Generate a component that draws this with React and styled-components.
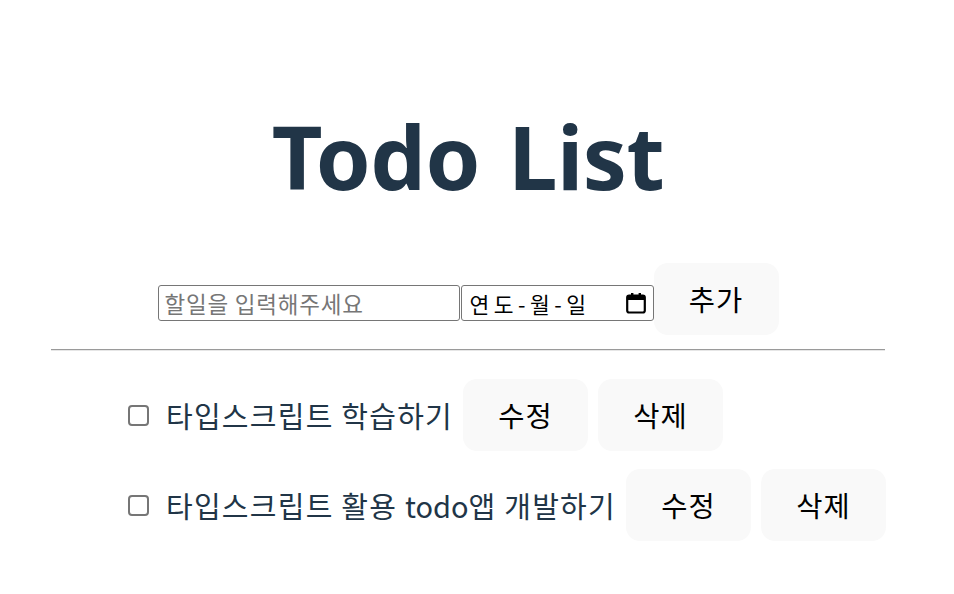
import React from "react";
import styled, { createGlobalStyle } from "styled-components";

const Global = createGlobalStyle`
  html, body { margin: 0; padding: 0; background: #ffffff; }
  body {
    font-family: "Noto Sans", "Noto Sans CJK KR", sans-serif;
    color: #213547;
  }
`;

const Page = styled.div`
  width: 834px;
  padding: 107px 0 0 51px;
  box-sizing: content-box;
`;

const Title = styled.h1`
  margin: 0;
  font-family: "Noto Sans", "Noto Sans CJK KR", sans-serif;
  font-weight: 700;
  font-size: 88px;
  line-height: 98px;
  word-spacing: 6px;
  letter-spacing: -0.5px;
  text-align: center;
  color: #213547;
`;

const Form = styled.form`
  display: flex;
  justify-content: center;
  align-items: center;
  margin-top: 58px;
`;

const TextInput = styled.input`
  box-sizing: border-box;
  width: 302px;
  height: 36px;
  margin-top: 8px;
  padding: 0 6px;
  border: 1px solid #767676;
  border-radius: 3px;
  font-family: "Noto Sans CJK KR", sans-serif;
  font-size: 22.5px;
  letter-spacing: 0.8px;
  color: #000;
  outline: none;
  &::placeholder { color: #767676; }
`;

const DateBox = styled.div`
  box-sizing: border-box;
  width: 193px;
  height: 36px;
  margin: 8px 0 0 1px;
  padding: 0 7px 0 8px;
  border: 1px solid #767676;
  border-radius: 3px;
  display: flex;
  align-items: center;
  justify-content: space-between;
  font-family: "Noto Sans CJK KR", sans-serif;
  font-size: 21.5px;
  color: #000;
  letter-spacing: 4.5px;
`;

const Button = styled.button`
  box-sizing: border-box;
  width: 125px;
  height: 72px;
  padding: 0;
  border: 1px solid transparent;
  border-radius: 14px;
  background: #f9f9f9;
  font-family: "Noto Sans CJK KR", sans-serif;
  font-size: 28.5px;
  line-height: 36px;
  letter-spacing: 1px;
  color: #000;
  cursor: pointer;
  flex: none;
`;

const Rule = styled.hr`
  margin: 14px 0 0 0;
  height: 0;
  border: none;
  border-top: 1px solid #9a9a9a;
  border-bottom: 1px solid #e6e6e6;
`;

const List = styled.ul`
  list-style: none;
  margin: 28px 0 0 0;
  padding: 0 0 0 70px;
  display: flex;
  flex-direction: column;
  gap: 18px;
`;

const Item = styled.li`
  display: flex;
  align-items: center;
`;

const Check = styled.input`
  appearance: none;
  box-sizing: border-box;
  width: 21px;
  height: 21px;
  margin: 0 17px 0 7px;
  border: 2px solid #767676;
  border-radius: 4px;
  background: #fff;
  flex: none;
`;

const Label = styled.span`
  font-family: "Noto Sans CJK KR", sans-serif;
  font-size: 29px;
  letter-spacing: 1.25px;
  color: #213547;
  margin-right: 10px;
  white-space: nowrap;
`;

const Latin = styled.span`
  letter-spacing: 0;
`;

const Actions = styled.div`
  display: flex;
  gap: 10px;
`;

const CalendarIcon = () => (
  <svg width="20" height="22" viewBox="0 0 20 22" aria-hidden="true">
    <rect x="5" y="1" width="2.4" height="4" fill="#000" />
    <rect x="12.6" y="1" width="2.4" height="4" fill="#000" />
    <rect x="1.2" y="3.5" width="17.6" height="17" rx="2" fill="none" stroke="#000" strokeWidth="2.2" />
    <rect x="1.2" y="3.5" width="17.6" height="4.5" fill="#000" />
  </svg>
);

const todos = [
  { id: 1, text: <>타입스크립트 학습하기</> },
  { id: 2, text: <>타입스크립트 활용 <Latin>todo</Latin>앱 개발하기</> },
];

export default function App() {
  return (
    <>
      <Global />
      <Page>
        <Title>Todo List</Title>
        <Form onSubmit={(e) => e.preventDefault()}>
          <TextInput type="text" placeholder="할일을 입력해주세요" />
          <DateBox>
            <span>연도-월-일</span>
            <CalendarIcon />
          </DateBox>
          <Button type="submit">추가</Button>
        </Form>
        <Rule />
        <List>
          {todos.map((t) => (
            <Item key={t.id}>
              <Check type="checkbox" />
              <Label>{t.text}</Label>
              <Actions>
                <Button>수정</Button>
                <Button>삭제</Button>
              </Actions>
            </Item>
          ))}
        </List>
      </Page>
    </>
  );
}
